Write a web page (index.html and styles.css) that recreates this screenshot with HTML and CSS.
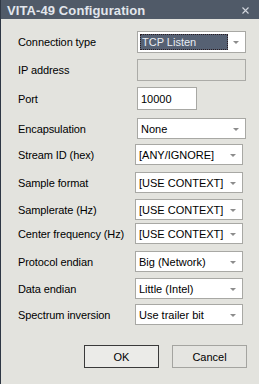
FILE: index.html
```html
<!DOCTYPE html>
<html lang="en">
<head>
    <meta charset="UTF-8">
    <meta name="viewport" content="width=device-width, initial-scale=1.0">
    <title>VITA-49 Configuration</title>
    <link rel="stylesheet" href="styles.css">
</head>
<body>
    <div class="window">
        <div class="titlebar">
            <span class="title">VITA-49 Configuration</span>
            <svg class="close" width="7" height="7" viewBox="0 0 7 7">
                <path d="M0.5 0.5 L6.5 6.5 M6.5 0.5 L0.5 6.5" stroke="#d3d7de" stroke-width="1.1" fill="none"/>
            </svg>
        </div>

        <div class="form">
            <div class="row r1">
                <span class="label">Connection type</span>
                <div class="combo focused"><span class="sel">TCP Listen</span></div>
            </div>
            <div class="row r2">
                <span class="label">IP address</span>
                <div class="textbox disabled"></div>
            </div>
            <div class="row r3">
                <span class="label">Port</span>
                <div class="textbox port">10000</div>
            </div>
            <div class="row r4">
                <span class="label">Encapsulation</span>
                <div class="combo">None</div>
            </div>
            <div class="row lower r5">
                <span class="label">Stream ID (hex)</span>
                <div class="combo">[ANY/IGNORE]</div>
            </div>
            <div class="row lower r6">
                <span class="label">Sample format</span>
                <div class="combo">[USE CONTEXT]</div>
            </div>
            <div class="row lower r7">
                <span class="label">Samplerate (Hz)</span>
                <div class="combo">[USE CONTEXT]</div>
            </div>
            <div class="row lower r8">
                <span class="label">Center frequency (Hz)</span>
                <div class="combo">[USE CONTEXT]</div>
            </div>
            <div class="row lower r9">
                <span class="label">Protocol endian</span>
                <div class="combo">Big (Network)</div>
            </div>
            <div class="row lower r10">
                <span class="label">Data endian</span>
                <div class="combo">Little (Intel)</div>
            </div>
            <div class="row lower r11">
                <span class="label">Spectrum inversion</span>
                <div class="combo">Use trailer bit</div>
            </div>
        </div>

        <div class="buttons">
            <button class="btn default">OK</button>
            <button class="btn">Cancel</button>
        </div>
    </div>
</body>
</html>
```

FILE: styles.css
```css
html, body {
    margin: 0;
    padding: 0;
}
body {
    width: 259px;
    height: 384px;
    overflow: hidden;
    background: #e3e3de;
    font-family: "Liberation Sans", Arial, sans-serif;
    font-size: 11px;
    color: #000;
}
.window {
    height: 384px;
    border-left: 1px solid #2e3744;
    box-sizing: border-box;
}
.titlebar {
    height: 19px;
    background: #505a68;
    display: flex;
    align-items: center;
    justify-content: space-between;
    padding: 0 10px 0 6px;
}
.title {
    color: #e2e6ec;
    font-weight: bold;
    font-size: 13px;
    letter-spacing: 0.1px;
    padding-top: 1px;
}
.close {
    margin-top: 1px;
}
.form {
    padding-left: 17px;
}
.row {
    display: flex;
    align-items: center;
}
.label {
    width: 119px;
    flex: none;
    letter-spacing: -0.1px;
}
.lower .label {
    width: 117px;
}
.r1 { margin-top: 12px; height: 22px; }
.r2 { margin-top: 6px; height: 22px; }
.r3 { margin-top: 6px; height: 23px; }
.r4 { margin-top: 8px; height: 21px; }
.r5 { margin-top: 5px; height: 21px; }
.r6 { margin-top: 7px; height: 21px; }
.r7 { margin-top: 6px; height: 21px; }
.r8 { margin-top: 3px; height: 21px; }
.r9 { margin-top: 7px; height: 21px; }
.r10 { margin-top: 6px; height: 21px; }
.r11 { margin-top: 5px; height: 21px; }

.combo, .textbox {
    box-sizing: border-box;
    height: 100%;
    width: 109px;
    border: 1px solid #a8a8a4;
    background: #fff;
    display: flex;
    align-items: center;
    padding-left: 3px;
    position: relative;
    white-space: nowrap;
}
.lower .combo {
    width: 108px;
}
.combo::after {
    content: "";
    position: absolute;
    right: 6px;
    top: 50%;
    margin-top: -1px;
    border-left: 3px solid transparent;
    border-right: 3px solid transparent;
    border-top: 3px solid #8c8c8c;
}
.combo.focused {
    padding: 2px;
}
.sel {
    box-sizing: border-box;
    width: 88px;
    height: 100%;
    background: #566173;
    border: 1px dotted #2a1d22;
    color: #e9edf3;
    display: flex;
    align-items: center;
    padding-left: 1px;
}
.textbox.disabled {
    background: #e3e3de;
    border-color: #ababa7;
}
.textbox.port {
    width: 60px;
}
.buttons {
    display: flex;
    gap: 13px;
    padding-left: 83px;
    margin-top: 20px;
}
.btn {
    box-sizing: border-box;
    width: 75px;
    height: 23px;
    font-family: "Liberation Sans", Arial, sans-serif;
    font-size: 11px;
    color: #000;
    background: #e5e5e1;
    border: 1px solid #a4a4a0;
    padding: 0;
}
.btn.default {
    background: #ebebe8;
    border-color: #3a3a3a;
}
```
